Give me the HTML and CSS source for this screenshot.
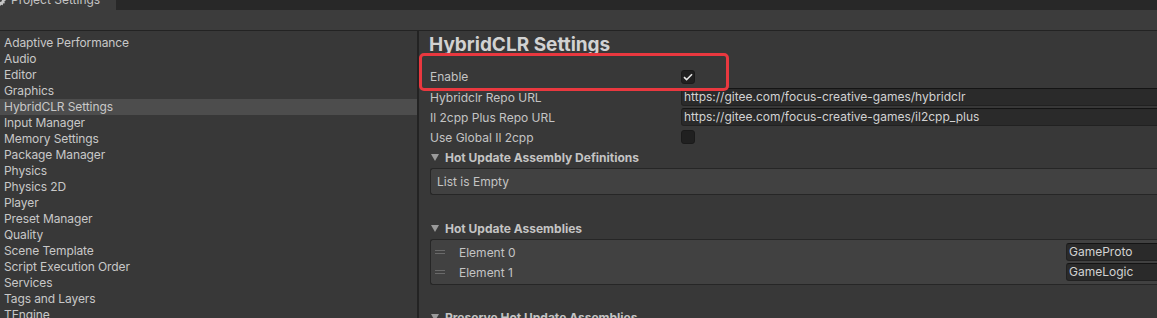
FILE: index.html
```html
<!DOCTYPE html>
<html>
<head>
	<title>Project Settings</title>
	<meta charset="utf-8">
	<link rel="stylesheet" href="styles.css">
</head>
<body>
	<div class="window">
		<div class="tabbar">
			<div class="tab">
				<svg class="tab-icon" width="12" height="12" viewBox="0 0 12 12"><path d="M6 0.5l1 1.6 1.8-.6.2 1.9 1.9.2-.6 1.8 1.6 1-1.6 1 .6 1.8-1.9.2-.2 1.9-1.8-.6-1 1.6-1-1.6-1.8.6-.2-1.9-1.9-.2.6-1.8L.5 6l1.6-1-.6-1.8 1.9-.2.2-1.9 1.8.6z" fill="#c4c4c4"/><circle cx="6" cy="6" r="2" fill="#3c3c3c"/></svg>
				Project Settings
			</div>
		</div>
		<div class="toolbar"></div>
		<div class="main">
			<ul class="tree">
				<li>Adaptive Performance</li>
				<li>Audio</li>
				<li>Editor</li>
				<li>Graphics</li>
				<li class="on">HybridCLR Settings</li>
				<li>Input Manager</li>
				<li>Memory Settings</li>
				<li>Package Manager</li>
				<li>Physics</li>
				<li>Physics 2D</li>
				<li>Player</li>
				<li>Preset Manager</li>
				<li>Quality</li>
				<li>Scene Template</li>
				<li>Script Execution Order</li>
				<li>Services</li>
				<li>Tags and Layers</li>
				<li>TEngine</li>
			</ul>
			<div class="splitter"></div>
			<div class="inspector">
				<h1 class="title">HybridCLR Settings</h1>
				<div class="row row-first">
					<label>Enable</label>
					<span class="toggle">
						<svg width="10" height="8" viewBox="0 0 10 8"><path d="M1 4.2l2.6 2.5L9 1.2" fill="none" stroke="#e6e6e6" stroke-width="1.6"/></svg>
					</span>
				</div>
				<div class="row">
					<label>Hybridclr Repo URL</label>
					<span class="textfield">https://gitee.com/focus-creative-games/hybridclr</span>
				</div>
				<div class="row">
					<label>Il 2cpp Plus Repo URL</label>
					<span class="textfield">https://gitee.com/focus-creative-games/il2cpp_plus</span>
				</div>
				<div class="row">
					<label>Use Global Il 2cpp</label>
					<span class="toggle"></span>
				</div>
				<div class="foldout">
					<svg width="8" height="7" viewBox="0 0 8 7"><polygon points="0,0 8,0 4,7" fill="#9a9a9a"/></svg>
					Hot Update Assembly Definitions
				</div>
				<div class="list list-empty">List is Empty</div>
				<div class="foldout foldout-gap">
					<svg width="8" height="7" viewBox="0 0 8 7"><polygon points="0,0 8,0 4,7" fill="#9a9a9a"/></svg>
					Hot Update Assemblies
				</div>
				<div class="list">
					<div class="element">
						<span class="handle"></span>
						<span class="el-label">Element 0</span>
						<span class="textfield">GameProto</span>
					</div>
					<div class="element">
						<span class="handle"></span>
						<span class="el-label">Element 1</span>
						<span class="textfield">GameLogic</span>
					</div>
				</div>
				<div class="foldout foldout-gap2">
					<svg width="8" height="7" viewBox="0 0 8 7"><polygon points="0,0 8,0 4,7" fill="#9a9a9a"/></svg>
					Preserve Hot Update Assemblies
				</div>
			</div>
		</div>
		<div class="highlight"></div>
	</div>
</body>
</html>
```

FILE: styles.css
```css
*{margin: 0;padding: 0;box-sizing: border-box;}
html,body{width: 100%;height: 100%;overflow: hidden;background: #383838;}
body{font-family: Inter, "Noto Sans", "Liberation Sans", sans-serif;font-size: 12px;color: #c4c4c4;}
ul li{list-style: none;}

.window{position: relative;width: 1200px;display: flow-root;}

.tabbar{height: 20px;margin-top: -10px;background: #282828;display: flex;}
.tab{width: 116px;height: 20px;line-height: 20px;background: #3c3c3c;color: #c4c4c4;font-size: 12px;display: flex;align-items: center;gap: 5px;}
.tab-icon{margin-left: -6px;}
.toolbar{height: 21px;background: #3c3c3c;border-bottom: 1px solid #232323;}

.main{display: flex;height: 300px;}
.tree{width: 417px;padding-top: 4px;background: #383838;}
.tree li{height: 16px;line-height: 16px;padding-left: 4px;color: #c8c8c8;letter-spacing: -0.1px;}
.tree .on{background: #4d4d4d;}
.splitter{width: 2px;background: #232323;}
.inspector{flex: 1;padding: 2px 0 0 11px;background: #383838;}

.title{font-size: 19px;line-height: 24px;font-weight: 700;color: #d2d2d2;margin-left: -1px;}
.row{display: flex;align-items: center;height: 18px;margin-bottom: 2px;}
.row-first{margin-top: 10px;height: 19px;}
.row label{width: 251px;flex: none;}
.toggle{width: 14px;height: 14px;background: #202020;border: 1px solid #1a1a1a;border-radius: 3px;display: flex;align-items: center;justify-content: center;}
.textfield{flex: 1;height: 18px;line-height: 16px;background: #2a2a2a;border: 1px solid #212121;border-top-color: #141414;border-radius: 3px 0 0 3px;padding-left: 2px;color: #d2d2d2;white-space: nowrap;}

.foldout{height: 18px;display: flex;align-items: center;gap: 6px;padding-left: 1px;font-weight: 700;color: #c4c4c4;}
.foldout-gap{margin-top: 24px;}
.foldout-gap2{margin-top: 23px;}

.list{margin-top: 2px;background: #414141;border: 1px solid #262626;border-right: none;border-radius: 3px 0 0 3px;padding: 3px 0;}
.list-empty{height: 27px;padding: 0 0 0 6px;line-height: 25px;}
.element{display: flex;align-items: center;height: 18px;padding-left: 4px;}
.element + .element{margin-top: 2px;}
.handle{width: 10px;height: 4px;border-top: 1px solid #6a6a6a;border-bottom: 1px solid #6a6a6a;flex: none;}
.el-label{width: 621px;padding-left: 14px;flex: none;}

.highlight{position: absolute;left: 419px;top: 53px;width: 310px;height: 38px;border: 3px solid #e9383f;border-radius: 5px;}
```
